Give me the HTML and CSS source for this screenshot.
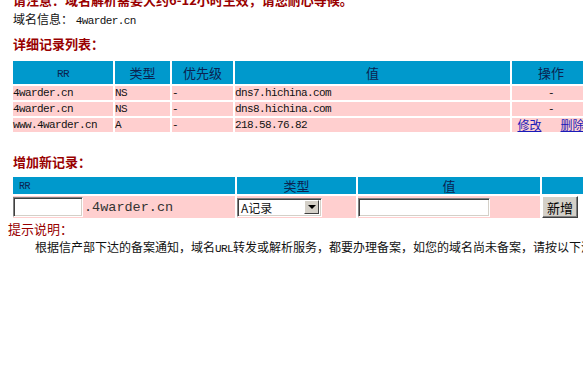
FILE: index.html
```html
<!DOCTYPE html>
<html lang="zh-CN">
<head>
  <meta charset="UTF-8">
  <title>域名解析</title>
  <link rel="stylesheet" href="styles.css">
</head>
<body>
  <div class="main">
    <div class="notice">请注意：域名解析需要大约6-12小时生效，请您耐心等候。</div>
    <div class="info">域名信息： <span class="mono">4warder.cn</span></div>
    <div class="title">详细记录列表：</div>
    <table class="records">
      <colgroup>
        <col style="width:100px"><col style="width:55px"><col style="width:61px"><col style="width:275px"><col style="width:78px">
      </colgroup>
      <thead>
        <tr>
          <th><span class="mono">RR</span></th>
          <th>类型</th>
          <th>优先级</th>
          <th>值</th>
          <th>操作</th>
        </tr>
      </thead>
      <tbody>
        <tr>
          <td class="mono">4warder.cn</td>
          <td class="mono">NS</td>
          <td class="mono">-</td>
          <td class="mono">dns7.hichina.com</td>
          <td class="mono center">-</td>
        </tr>
        <tr>
          <td class="mono">4warder.cn</td>
          <td class="mono">NS</td>
          <td class="mono">-</td>
          <td class="mono">dns8.hichina.com</td>
          <td class="mono center">-</td>
        </tr>
        <tr>
          <td class="mono">www.4warder.cn</td>
          <td class="mono">A</td>
          <td class="mono">-</td>
          <td class="mono">218.58.76.82</td>
          <td class="center"><a href="#">修改</a><a href="#" class="gap">删除</a></td>
        </tr>
      </tbody>
    </table>

    <div class="title add-title">增加新记录：</div>
    <table class="add">
      <colgroup>
        <col style="width:222px"><col style="width:119px"><col style="width:182px"><col style="width:60px">
      </colgroup>
      <thead>
        <tr>
          <th class="left"><span class="mono small">RR</span></th>
          <th>类型</th>
          <th>值</th>
          <th></th>
        </tr>
      </thead>
      <tbody>
        <tr>
          <td><div class="rr-field"><input type="text" class="box rr-input"><span class="suffix">.4warder.cn</span></div></td>
          <td>
            <div class="select">
              <span class="select-text">A记录</span>
              <span class="select-btn"><span class="arrow"></span></span>
            </div>
          </td>
          <td><input type="text" class="box value-input"></td>
          <td class="plain"><button class="btn">新增</button></td>
        </tr>
      </tbody>
    </table>
  </div>
  <div class="tip">
    <div class="tip-title">提示说明：</div>
    <p class="tip-text">根据信产部下达的备案通知，域名<span class="mono">URL</span>转发或解析服务，都要办理备案，如您的域名尚未备案，请按以下流程办理备案手续。</p>
  </div>
</body>
</html>
```

FILE: styles.css
```css
html { overflow: hidden; }
body { margin: 0; background: #fff; color: #111; font-family: "Noto Sans CJK SC", sans-serif; font-size: 12px; line-height: 18px; }
.main { padding-left: 13px; }
.mono { font-family: "Liberation Mono", monospace; font-size: 11px; letter-spacing: -0.6px; }
.notice { margin-top: -9px; color: #990000; font-weight: bold; font-size: 13px; white-space: nowrap; }
.info { margin-top: 1px; }
.title { margin-top: 5px; color: #990000; font-weight: bold; font-size: 13px; }
.add-title { margin-top: 19px; }

table { border-collapse: separate; border-spacing: 2px; table-layout: fixed; margin-left: -2px; }
th { background-color: #0099cc; color: #0b2350; font-weight: normal; padding: 0; text-align: center; }
td { background-color: #ffcfcf; padding: 0; white-space: nowrap; }

.records { width: 581px; margin-top: 6px; }
.records th { height: 23px; font-size: 13px; }
.records td { height: 14px; line-height: 14px; }
.center { text-align: center; }
.records a { color: #1a1ab8; font-size: 12px; line-height: 14px; }
.records .gap { margin-left: 19px; }

.add { width: 593px; margin-top: 4px; }
.add th { height: 14px; line-height: 14px; font-size: 13px; }
.add th.left { text-align: left; padding-left: 6px; }
.small { font-size: 10px; }
.add td { height: 22px; }
.add td.plain { background: none; }

.rr-field { display: flex; align-items: center; }
.box { box-sizing: border-box; height: 19px; margin: 0; padding: 0 2px; background: #fff; border: 1px solid; border-color: #808080 #fff #fff #808080; box-shadow: inset 1px 1px 0 #404040, inset -1px -1px 0 #d4d0c8; outline: none; }
.rr-input { width: 70px; height: 20px; }
.suffix { font-family: "Liberation Mono", monospace; font-size: 13.5px; color: #333; margin-left: 1px; padding-top: 2px; }
.value-input { width: 132px; }

.select { box-sizing: border-box; display: flex; align-items: center; justify-content: space-between; width: 85px; height: 19px; background: #fff; border: 1px solid; border-color: #808080 #fff #fff #808080; box-shadow: inset 1px 1px 0 #404040, inset -1px -1px 0 #d4d0c8; padding: 0 2px 0 3px; }
.select-text { font-size: 12px; line-height: 15px; color: #111; }
.select-btn { box-sizing: border-box; display: flex; align-items: center; justify-content: center; width: 15px; height: 14px; background: #d4d0c8; border: 1px solid; border-color: #fff #404040 #404040 #fff; }
.arrow { width: 0; height: 0; border-left: 4px solid transparent; border-right: 4px solid transparent; border-top: 4px solid #000; }

.btn { box-sizing: border-box; width: 36px; height: 22px; margin: 0; padding: 0; background: #d4d0c8; border: 1px solid; border-color: #fff #404040 #404040 #fff; box-shadow: inset -1px -1px 0 #808080; font-family: "Noto Sans CJK SC", sans-serif; font-size: 13px; color: #000; }

.tip { padding-left: 8px; }
.tip-title { color: #990000; font-size: 13px; }
.tip-text { margin: 0; text-indent: 27px; white-space: nowrap; }
```
